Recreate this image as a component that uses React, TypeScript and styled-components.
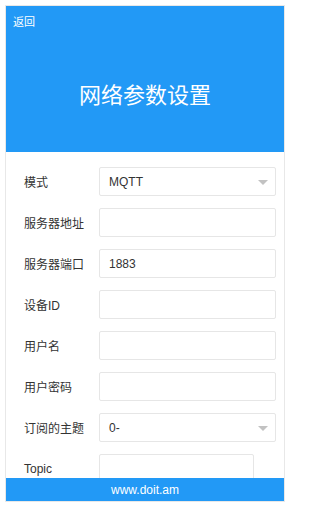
import styled, { createGlobalStyle } from 'styled-components';

const GlobalStyle = createGlobalStyle`
  html, body {
    margin: 0;
    padding: 0;
    background: #ffffff;
    overflow: hidden;
  }
  body {
    font-family: 'Liberation Sans', 'Noto Sans CJK SC', sans-serif;
    color: #333;
  }
`;

const blue = '#2299f6';

interface Field {
  label: string;
  value?: string;
  select?: boolean;
  narrow?: boolean;
}

const fields: Field[] = [
  { label: '模式', value: 'MQTT', select: true },
  { label: '服务器地址' },
  { label: '服务器端口', value: '1883' },
  { label: '设备ID' },
  { label: '用户名' },
  { label: '用户密码' },
  { label: '订阅的主题', value: '0-', select: true },
  { label: 'Topic', narrow: true },
];

const App = () => {
  return (
    <Page>
      <GlobalStyle />
      <Card>
        <Header>
          <Back>返回</Back>
          <Title>网络参数设置</Title>
        </Header>
        <Form>
          {fields.map((f) => (
            <Row key={f.label}>
              <Label>{f.label}</Label>
              <Control narrow={f.narrow}>
                {f.value}
                {f.select && <Arrow />}
              </Control>
            </Row>
          ))}
        </Form>
        <Footer>www.doit.am</Footer>
      </Card>
    </Page>
  );
};

const Page = styled.div`
  padding: 5px;
  height: 507px;
  box-sizing: border-box;
`;

const Card = styled.div`
  position: relative;
  width: 280px;
  border: 1px solid #e8e8e8;
  height: 100%;
  box-sizing: border-box;
  overflow: hidden;
`;

const Header = styled.div`
  background: ${blue};
  height: 146px;
  display: flex;
  flex-direction: column;
  color: #fff;
`;

const Back = styled.div`
  font-size: 11px;
  padding: 10px 0 0 7px;
  line-height: 12px;
`;

const Title = styled.h1`
  margin: 0;
  flex: 1;
  display: flex;
  align-items: center;
  justify-content: center;
  font-size: 22px;
  font-weight: normal;
  padding-top: 6px;
`;

const Form = styled.div`
  display: flex;
  flex-direction: column;
  gap: 12px;
  padding: 15px 8px 0 18px;
`;

const Row = styled.div`
  display: flex;
  align-items: center;
  height: 29px;
`;

const Label = styled.div`
  width: 75px;
  flex-shrink: 0;
  font-size: 12px;
  color: #333;
`;

const Control = styled.div<{ narrow?: boolean }>`
  position: relative;
  box-sizing: border-box;
  height: 29px;
  width: ${(p) => (p.narrow ? '155px' : '177px')};
  border: 1px solid #e6e6e6;
  border-radius: 2px;
  padding: 0 9px;
  display: flex;
  align-items: center;
  font-size: 12px;
  color: #333;
  background: #fff;
`;

const Arrow = styled.span`
  position: absolute;
  right: 7px;
  top: 12px;
  width: 0;
  height: 0;
  border-left: 5px solid transparent;
  border-right: 5px solid transparent;
  border-top: 5px solid #c2c2c2;
`;

const Footer = styled.div`
  position: absolute;
  left: 0;
  right: 0;
  bottom: 0;
  height: 23px;
  background: ${blue};
  color: #fff;
  font-size: 12px;
  display: flex;
  align-items: center;
  justify-content: center;
`;

export default App;
